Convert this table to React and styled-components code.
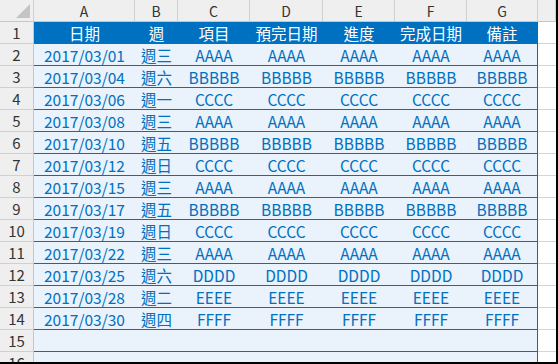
import React from "react";
import styled, { createGlobalStyle } from "styled-components";

const Global = createGlobalStyle`
  body {
    margin: 0;
    background: #fff;
    font-family: "Noto Sans CJK TC", "Noto Sans", sans-serif;
  }
`;

const Frame = styled.div`
  width: 558px;
  height: 364px;
  box-sizing: border-box;
  border-right: 2px solid #000;
  border-bottom: 2px solid #000;
  overflow: hidden;
  background: #fff;
`;

const Sheet = styled.div`
  display: grid;
  grid-template-columns: 34px 101px 43px 72px 73px 72px 72px 71px 1fr;
  grid-auto-rows: 22px;
`;

const ColHead = styled.div`
  box-sizing: border-box;
  background: #efefef;
  border-right: 1px solid #d0d0d0;
  border-bottom: 1px solid #c6c6c6;
  color: #333;
  font-size: 14px;
  display: flex;
  align-items: center;
  justify-content: center;
`;

const Corner = styled(ColHead)`
  align-items: flex-end;
  justify-content: flex-end;
  padding: 0 3px 3px 0;
`;

const RowHead = styled.div`
  box-sizing: border-box;
  background: #efefef;
  border-right: 1px solid #c6c6c6;
  border-bottom: 1px solid #d0d0d0;
  color: #333;
  font-size: 15px;
  display: flex;
  align-items: center;
  justify-content: center;
`;

const Cell = styled.div`
  box-sizing: border-box;
  background: ${(p) => (p.$head ? "#0070c0" : "#eaf2fb")};
  color: ${(p) => (p.$head ? "#fff" : "#0070c0")};
  border-bottom: 1px solid #0070c0;
  border-right: ${(p) => (p.$last ? "1px solid #0070c0" : "none")};
  font-size: 15.5px;
  white-space: nowrap;
  display: flex;
  align-items: center;
  justify-content: center;
`;

const Blank = styled.div`
  box-sizing: border-box;
  border-bottom: 1px solid #d4d4d4;
`;

const header = ["日期", "週", "項目", "預完日期", "進度", "完成日期", "備註"];

const data = [
  ["2017/03/01", "週三", "AAAA"],
  ["2017/03/04", "週六", "BBBBB"],
  ["2017/03/06", "週一", "CCCC"],
  ["2017/03/08", "週三", "AAAA"],
  ["2017/03/10", "週五", "BBBBB"],
  ["2017/03/12", "週日", "CCCC"],
  ["2017/03/15", "週三", "AAAA"],
  ["2017/03/17", "週五", "BBBBB"],
  ["2017/03/19", "週日", "CCCC"],
  ["2017/03/22", "週三", "AAAA"],
  ["2017/03/25", "週六", "DDDD"],
  ["2017/03/28", "週二", "EEEE"],
  ["2017/03/30", "週四", "FFFF"],
];

const rows = [
  header,
  ...data.map(([d, w, t]) => [d, w, t, t, t, t, t]),
  ["", "", "", "", "", "", ""],
  ["", "", "", "", "", "", ""],
];

export default function App() {
  return (
    <Frame>
      <Global />
      <Sheet>
        <Corner>
          <svg width="14" height="14" viewBox="0 0 14 14">
            <polygon points="14,0 14,14 0,14" fill="#c4c4c4" />
          </svg>
        </Corner>
        {["A", "B", "C", "D", "E", "F", "G", ""].map((c, i) => (
          <ColHead key={i}>{c}</ColHead>
        ))}
        {rows.map((r, ri) => (
          <React.Fragment key={ri}>
            <RowHead>{ri + 1}</RowHead>
            {r.map((v, ci) => (
              <Cell key={ci} $head={ri === 0} $last={ci === 6}>
                {v}
              </Cell>
            ))}
            <Blank />
          </React.Fragment>
        ))}
      </Sheet>
    </Frame>
  );
}
